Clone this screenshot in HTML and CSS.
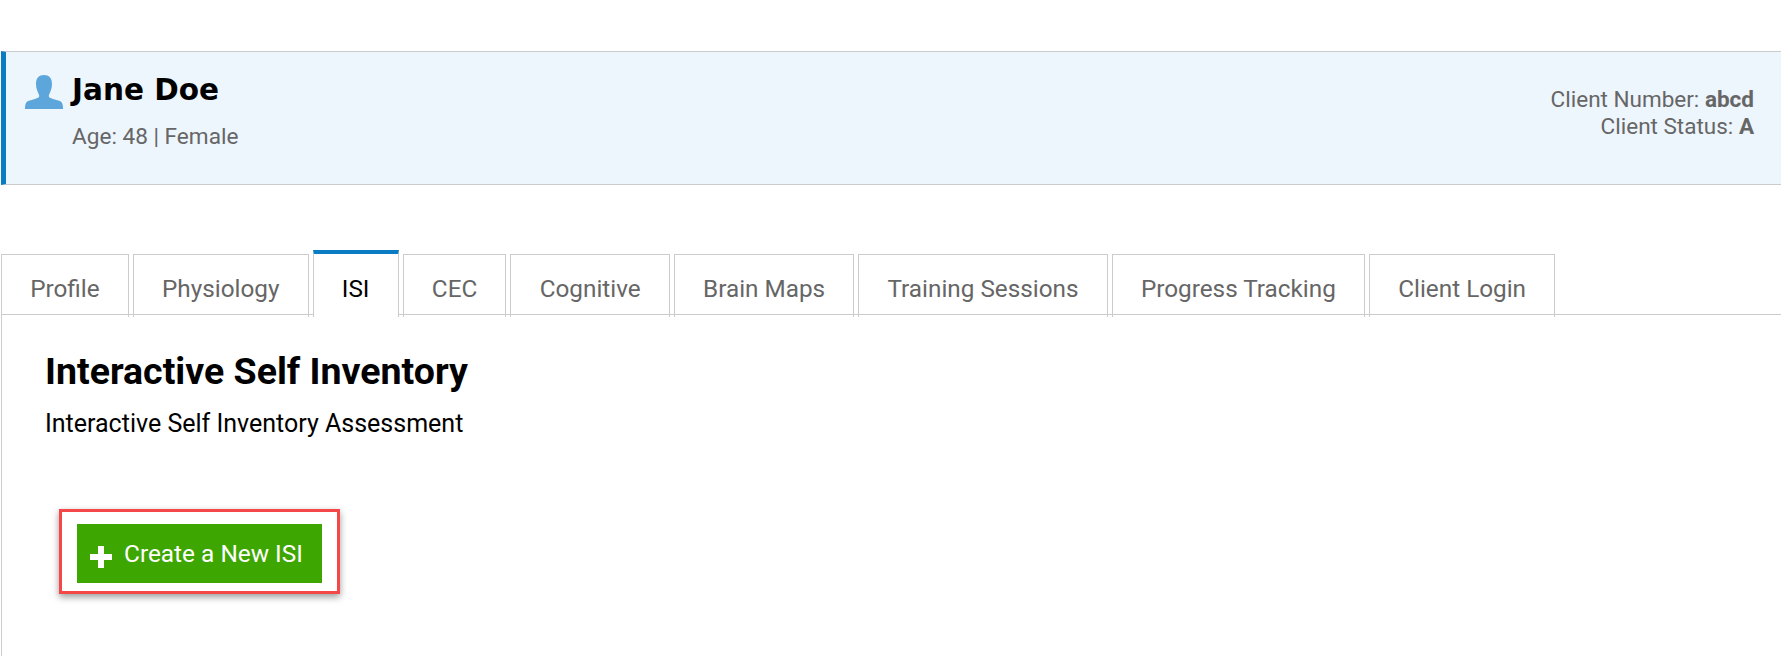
FILE: index.html
```html
<!DOCTYPE html>
<html lang="en">
<head>
    <meta charset="UTF-8">
    <meta name="viewport" content="width=device-width, initial-scale=1.0">
    <title>ISI</title>
    <link rel="stylesheet" href="styles.css">
</head>
<body>

<section class="client-banner">
    <div class="client-main">
        <svg class="client-icon" viewBox="0 0 38 34" aria-hidden="true">
            <path d="M19 0c5 0 8 3 8 9 0 5-2 8-3 11-1 2 1 3 4 4l7 2c2 1 3 3 3 8H0c0-5 1-7 3-8l7-2c3-1 5-2 4-4-1-3-3-6-3-11 0-6 3-9 8-9z"/>
        </svg>
        <div>
            <h1 class="client-name">Jane Doe</h1>
            <p class="client-age">Age: 48 | Female</p>
        </div>
    </div>
    <div class="client-meta">
        <div>Client Number: <b>abcd</b></div>
        <div>Client Status: <b>A</b></div>
    </div>
</section>

<ul class="tabs">
    <li class="tab">Profile</li>
    <li class="tab">Physiology</li>
    <li class="tab tab-active">ISI</li>
    <li class="tab">CEC</li>
    <li class="tab">Cognitive</li>
    <li class="tab">Brain Maps</li>
    <li class="tab">Training Sessions</li>
    <li class="tab">Progress Tracking</li>
    <li class="tab">Client Login</li>
</ul>

<section class="tab-panel">
    <h2 class="panel-title">Interactive Self Inventory</h2>
    <p class="panel-text">Interactive Self Inventory Assessment</p>
    <div class="highlight-box">
        <button class="create-button">
            <svg class="plus-icon" viewBox="0 0 24 24" aria-hidden="true">
                <path d="M9 1h6v8h8v6h-8v8H9v-8H1V9h8z"/>
            </svg>
            <span>Create a New ISI</span>
        </button>
    </div>
</section>

</body>
</html>
```

FILE: styles.css
```css
:root{
    --text-color: #666;
    --line-color: #ccc;
    --blue: #0a7cc4;
}

*{
    padding: 0;
    margin: 0;
    box-sizing: border-box;
    font-family: Roboto, 'Liberation Sans', sans-serif;
}

body{
    padding: 51px 0 0 1px;
    background: #fff;
    overflow: hidden;
}

.client-banner{
    display: flex;
    justify-content: space-between;
    height: 134px;
    background: #edf5fd;
    border-top: 1px solid var(--line-color);
    border-bottom: 1px solid var(--line-color);
    border-left: 5px solid var(--blue);
    padding: 23px 27px 0 19px;
}

.client-main{
    display: flex;
    align-items: flex-start;
    gap: 9px;
}

.client-icon{
    width: 38px;
    height: 34px;
    fill: #5ca6dc;
}

.client-name{
    font-family: 'DejaVu Sans', sans-serif;
    font-size: 29.5px;
    font-weight: 700;
    line-height: 30px;
    color: #000;
}

.client-age{
    margin-top: 19px;
    font-size: 22.6px;
    line-height: 25px;
    color: var(--text-color);
}

.client-meta{
    padding-top: 11px;
    text-align: right;
    font-size: 22.5px;
    line-height: 27px;
    color: var(--text-color);
}

.tabs{
    display: flex;
    gap: 4px;
    margin-top: 65px;
    height: 67px;
    padding-top: 4px;
    list-style: none;
    position: relative;
    z-index: 1;
}

.tab{
    height: 63px;
    padding: 0 28.2px;
    border: 1px solid var(--line-color);
    border-bottom: 0;
    font-size: 24.3px;
    line-height: 67px;
    color: var(--text-color);
}

.tab-active{
    height: 67px;
    margin-top: -4px;
    border-top: 4px solid var(--blue);
    background: #fff;
    color: #000;
    line-height: 69px;
}

.tab-panel{
    height: 360px;
    margin-top: -3px;
    padding: 34px 45px 0 43px;
    border-top: 1px solid var(--line-color);
    border-left: 1px solid var(--line-color);
}

.panel-title{
    font-size: 37.5px;
    font-weight: 700;
    line-height: 44px;
    color: #000;
}

.panel-text{
    margin-top: 17px;
    font-size: 25px;
    line-height: 28px;
    color: #000;
}

.highlight-box{
    display: inline-block;
    margin: 71px 0 0 14px;
    padding: 12px 15px 8px 15px;
    border: 3px solid #f44848;
    box-shadow: 0 3px 7px rgba(0,0,0,.4);
}

.create-button{
    display: flex;
    align-items: center;
    gap: 11px;
    width: 245px;
    height: 59px;
    padding-left: 12px;
    border: 0;
    background: #3ea600;
    color: #fff;
    font-size: 24.4px;
}

.plus-icon{
    width: 24px;
    height: 24px;
    margin-top: 6px;
    fill: #fff;
}
```
